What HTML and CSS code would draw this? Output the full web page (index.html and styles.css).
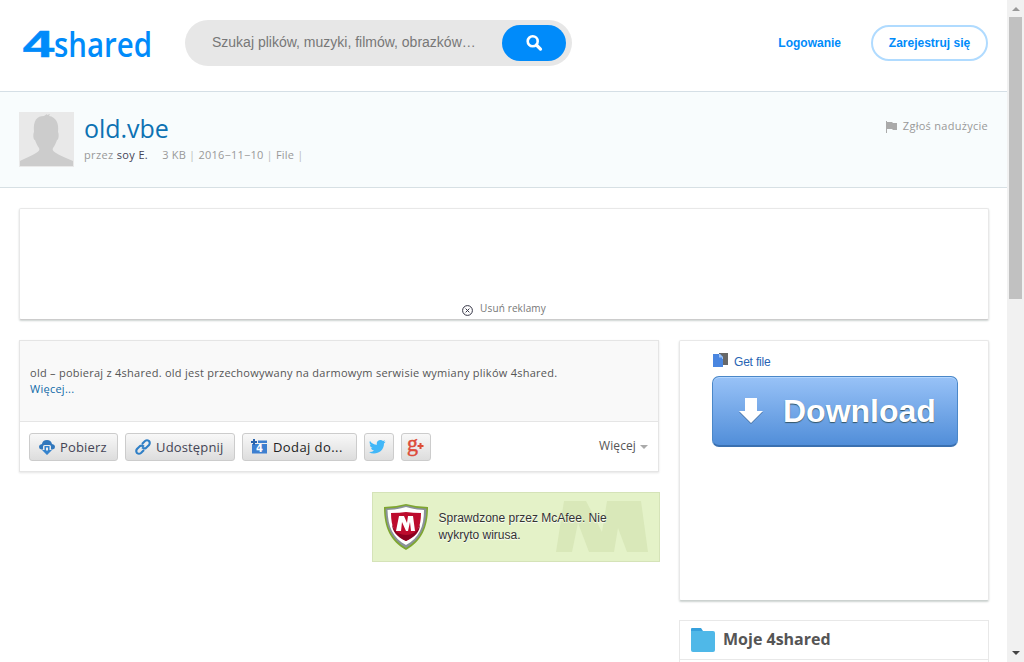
FILE: index.html
```html
<!DOCTYPE html>
<html lang="pl">
<head>
<meta charset="utf-8">
<title>old.vbe - 4shared</title>
<link rel="stylesheet" href="styles.css">
</head>
<body>
<div class="page">
  <header class="top">
    <svg class="logo" width="134" height="34" viewBox="0 0 134 34"><g fill="#008bfa"><text class="logo-four" transform="translate(.8 29.500) scale(1.530 1)">4</text><text class="logo-word" x="32" y="30" textLength="98" lengthAdjust="spacingAndGlyphs">shared</text></g></svg>
    <div class="search"><span class="placeholder">Szukaj plików, muzyki, filmów, obrazków…</span>
      <button class="search-btn"><svg width="18" height="18" viewBox="0 0 18 18" fill="none" stroke="#fff"><circle cx="7.7" cy="7.3" r="5" stroke-width="2.6"/><path d="M11.4 11 15.5 15.1" stroke-width="3.2" stroke-linecap="round"/></svg></button>
    </div>
    <nav class="account"><a class="login">Logowanie</a><a class="signup">Zarejestruj się</a></nav>
  </header>
  <section class="filebar">
    <svg class="avatar" width="55" height="55" viewBox="0 0 55 55"><path d="M0 0h55v55H0z" fill="#e9e9e9"/><path d="M1 54v-5c5-3 12-5 16-8 3-2 4-3 3-5-2-3-3-5-4-8-2 0-2-7-1-8C14 8 18 4 25 4l3-2v1l3-1-1 2c7 1 10 7 9 16 1 1 1 8-1 8-1 3-2 5-4 8-1 2 0 3 3 5 4 3 11 5 17 8v5z" fill="#ccc"/></svg>
    <div class="fileinfo"><h1>old.vbe</h1><p class="meta"><span class="by">przez <b>soy E.</b></span><span class="facts">3 KB <i>|</i> 2016−11−10 <i>|</i> File <i>|</i></span></p></div>
    <a class="report"><svg width="11" height="12" viewBox="0 0 11 12"><path d="M.5 0v12" stroke="#aaa"/><path d="M1 1h5l1 1h4v7H7L6 8H1z" fill="#aaa"/></svg><span>Zgłoś nadużycie</span></a>
  </section>
  <div class="ad"><svg width="11" height="11" viewBox="0 0 11 11" fill="none" stroke="#334"><circle cx="5.500" cy="5.500" r="4.900"/><path d="m3.600 3.600 3.800 3.800m0-3.800L3.600 7.400"/></svg><span>Usuń reklamy</span></div>
  <main class="columns">
    <div class="left">
      <div class="card">
        <div class="desc"><p>old – pobieraj z 4shared. old jest przechowywany na darmowym serwisie wymiany plików 4shared.</p><a>Więcej...</a></div>
        <div class="tools">
          <button class="btn get"><svg width="16" height="16" viewBox="0 0 16 16"><path d="M2.500 10.500Q0 10 0 8q0-2.500 3-3Q3.500 1 8 1q4 0 5 4 3 .5 3 3 0 2-2.500 2.500H12V7.500Q12 6 10.500 6h-5Q4 6 4 7.500v3z" fill="#3278bd"/><path d="M5.500 7h5v4H13l-5 5-5-5h2.500z" fill="#3583cd"/><path d="M7 8.500h2v3H7z" fill="#eee"/></svg><span>Pobierz</span></button>
          <button class="btn share"><svg width="16" height="16" viewBox="0 0 16 16" fill="none" stroke="#2f7fc6" stroke-width="2.100"><path d="m7 5 3-3q2-1.500 4 0 1.500 2 0 4l-3 3q-2 1-4-.5M9 11l-3 3q-2 1.500-4 0-1.500-2 0-4l3-3q2-1 4 .5"/></svg><span>Udostępnij</span></button>
          <button class="btn add"><svg width="17" height="15" viewBox="0 0 17 15"><path d="M1 5h15v9.500H1zM7 1.500h9v2.500H7z" fill="#3d7fd0"/><path d="M3 0v6M0 3h6" stroke="#2864ad" stroke-width="2"/><text class="four" x="5" y="13" fill="#fff">4</text></svg><span>Dodaj do...</span></button>
          <button class="btn sq"><svg width="17" height="14" viewBox="0 0 17 14"><path d="M1 1q3 4 7 3.800C7 2 9 0 11.500 0q1.500 0 2.500 1l2-.8-1 1.800 1.700-.3L15 3.500C15 10 10 13.500 5 13.500Q2 13.500 0 12q3 .2 5-1.500Q2.500 10 2 8l1.500-.1Q1 7 .7 4.500L2 5Q-.3 3 1 1z" fill="#41b7f8"/></svg></button>
          <button class="btn sq"><svg class="gp" width="18" height="24" viewBox="0 0 18 24"><text class="gplus" x="0" y="16" fill="#dd4b39" textLength="11" lengthAdjust="spacingAndGlyphs">g</text><path d="M10.500 11h6M13.500 8v6" stroke="#dd4b39" stroke-width="2"/></svg></button>
          <a class="more">Więcej</a>
        </div>
      </div>
      <div class="mcafee">
        <svg class="shield" width="44" height="46" viewBox="0 0 44 46"><path d="M0 3Q11 3 22 0q11 3 22 3c0 20-6 34-22 43C6 37 0 23 0 3z" fill="#7ea62f"/><path d="M1.500 4.500Q12 4.500 22 1.500q10 3 20.500 3c0 18-6 31-20.500 39.500C7.500 35.500 1.500 22.500 1.500 4.500z" fill="#8a929a"/><path d="M3.500 6Q12 6 22 3q10 3 18 3c0 17-5 28-18 35C9 34 4 23 3.500 6z" fill="#fff"/><path d="M7 9q9 0 15-1 7 1 15 1c0 14-4 22-15 28C11 31 7 23 7 9z" fill="#bd0b2d"/><path d="M22 31c7 0 12-4 14-11 0 8-5 13-14 17-9-4-14-10-14-17 2 7 7 11 14 11z" fill="#8c001f"/><path d="M15 12h5l3 7 1-7h5l2 15h-4l-1-9-2 9h-2l-4-9-1 9h-5z" fill="#fff"/></svg>
        <p>Sprawdzone przez McAfee. Nie wykryto wirusa.</p>
        <svg class="mark" width="94" height="51" viewBox="0 0 94 51"><path d="M8 0h22l16 31 5-31h34l7 51H71L62 27l-4 24H33L22 22l-6 29H0z" fill="#d9e8b9"/></svg>
      </div>
    </div>
    <aside class="right">
      <div class="promo">
        <div class="getfile"><svg width="15" height="14" viewBox="0 0 15 14"><path d="M6 0h9v12H6z" fill="#686868"/><path d="M0 1h7l3 3v10H0z" fill="#4a86e0"/><path d="M6 1h1l3 3v2H9V4.500H6z" fill="#9cc4fa"/></svg><a>Get file</a></div>
        <a class="download"><svg width="24" height="26" viewBox="0 0 24 26"><path d="M6 1h12v13h6L12 26 0 14h6z" fill="#456f9f"/><path d="M6 0h12v13h6L12 25 0 13h6z" fill="#fff"/></svg><span>Download</span></a>
      </div>
      <div class="mine"><svg width="24" height="24" viewBox="0 0 24 24"><path d="M0 1q0-1 1-1h9l2 3v3H0z" fill="#36a0dc"/><path d="M0 3h22q2 0 2 2v17q0 2-2 2H2q-2 0-2-2z" fill="#4fb8e8"/></svg><span>Moje 4shared</span></div>
    </aside>
  </main>
</div>
<div class="scroll"><i class="up"></i><i class="thumb"></i><i class="down"></i></div>
</body>
</html>
```
FILE: styles.css
```css
* { box-sizing: border-box; }
body { margin: 0; width: 1024px; height: 662px; overflow: hidden; display: flex; background: #fff; color: #555; font-family: "Open Sans", "Noto Sans", sans-serif; }
h1, p { margin: 0; font-weight: 400; }
span, a { white-space: nowrap; }
button { font: inherit; margin: 0; padding: 0; }
svg { display: block; flex: none; }
.page { width: 1007px; height: 662px; overflow: hidden; flex: none; }
.top { height: 92px; border-bottom: 1px solid #d5dfe6; display: flex; padding: 20px 19px 0 22px; font-family: "Liberation Sans", Arial, sans-serif; }
.logo { margin-top: 7px; overflow: visible; }
.logo-four { font: 700 37px "Liberation Sans", sans-serif; stroke: #008bfa; stroke-width: .5px; }
.logo-word { font: 600 34px "Open Sans", sans-serif; }
.search { margin-left: 29px; width: 387px; height: 46px; border-radius: 23px; background: #e7e7e7; display: flex; align-items: center; justify-content: space-between; padding: 0 6px 0 27px; }
.placeholder { font-size: 14px; color: #777; line-height: 44px; height: 46px; }
.search-btn { width: 64px; height: 36px; border: 0; border-radius: 18px; background: #008bfa; display: flex; align-items: center; justify-content: center; }
.account { margin-left: auto; display: flex; height: 46px; align-items: center; font-size: 12px; font-weight: 700; color: #008bfa; }
.signup { margin-left: 30px; width: 117px; height: 36px; line-height: 32px; text-align: center; border: 2px solid #b0dbff; border-radius: 18px; }
.filebar { height: 96px; border-bottom: 1px solid #d7e0e4; background: #f8fcfd; display: flex; padding: 20px 19px 0; }
.fileinfo { margin-left: 10px; }
h1 { font-size: 25px; line-height: 32px; color: #0d72b3; letter-spacing: -.05px; }
.meta { display: flex; gap: 14px; font-size: 11px; line-height: 16px; margin-top: 3px; color: #999; letter-spacing: .36px; }
.facts { letter-spacing: .22px; }
.meta b { color: #445; font-weight: 400; }
.meta i { color: #bbb; font-style: normal; }
.report { margin-left: auto; display: flex; align-items: flex-start; gap: 6px; font-size: 11px; line-height: 16px; color: #999; padding-top: 6px; letter-spacing: .28px; }
.report svg { margin-top: 3px; }
.ad { margin: 20px 18px 0 19px; height: 112px; border: 1px solid #e8e8e8; border-bottom-color: #ccc; border-radius: 2px; box-shadow: 0 1px 2px #ccd2d0; display: flex; justify-content: center; gap: 7px; padding-top: 91px; font-size: 10px; line-height: 16px; color: #777; letter-spacing: .13px; }
.ad svg { margin-top: 5px; }
.columns { display: flex; gap: 19px; margin: 20px 18px 0 19px; align-items: flex-start; }
.left { width: 641px; }
.card { width: 640px; border: 1px solid #e5e5e5; box-shadow: 0 1px 2px #e5e5e5; }
.desc { height: 81px; background: #f9f9f9; border-bottom: 1px solid #e5e5e5; padding: 24px 10px 0; font-size: 11px; line-height: 16px; color: #555; letter-spacing: .26px; }
.desc p { white-space: nowrap; }
.desc a { color: #0f69a8; display: block; }
.tools { height: 49px; padding: 11px 10px 0 9px; display: flex; gap: 7px; }
.btn { height: 28px; border: 1px solid #ccc; border-radius: 3px; background: linear-gradient(#f8f8f8, #ddd); display: flex; align-items: center; gap: 5px; padding: 0 0 1px 9px; font-size: 13px; color: #445; letter-spacing: .15px; }
.get { width: 89px; }
.share { width: 110px; }
.add { width: 115px; padding-left: 8px; color: #222; letter-spacing: .42px; gap: 5px; }
.sq { width: 30px; padding: 0; justify-content: center; }
.sq:nth-child(4) { padding-right: 3px; }
.four { font: 700 10px "DejaVu Sans", sans-serif; letter-spacing: 0; }
.gp { overflow: visible; }
.gplus { font: 400 23px "Liberation Serif", serif; letter-spacing: 0; stroke: #dd4b39; stroke-width: .5px; }
.more { margin-left: auto; font-size: 12px; line-height: 26px; color: #555; display: flex; align-items: center; gap: 4px; height: 26px; letter-spacing: .1px; }
.more::after { content: ""; border: 4px solid transparent; border-top-color: #aaa; border-bottom: 0; margin-top: 2px; }
.mcafee { margin: 20px 0 0 353px; width: 288px; height: 70px; background: #e4f2c8; border: 1px solid #d5e3b8; display: grid; grid-template-columns: 54px 1fr; padding: 11px 0 0 11px; font-family: "Liberation Sans", Arial, sans-serif; }
.mcafee > * { grid-row: 1; }
.mcafee p { grid-column: 2; z-index: 1; width: 180px; font-size: 12px; line-height: 17px; color: #333; padding: 6px 0 0 .5px; text-shadow: 0 1px 1px #fff; }
.mark { grid-column: 2; margin: -3px 0 0 118px; }
.right { width: 310px; }
.promo { height: 261px; border: 1px solid #e8e8e8; border-bottom-color: #ccd2d0; border-radius: 2px; box-shadow: 0 1px 2px #ccd2d0; padding: 12px 0 0 32px; font-family: "Liberation Sans", Arial, sans-serif; }
.getfile { display: flex; gap: 6px; height: 23px; padding-left: 1px; color: #2864b4; font-size: 12px; line-height: 18px; letter-spacing: -.2px; }
.download { width: 246px; height: 71px; border: 1px solid #4a87c8; border-bottom: 2px solid #3a70b0; border-radius: 7px; background: linear-gradient(#98c2f7, #518ed9); box-shadow: inset 0 1px #b5d7ff; display: flex; align-items: center; color: #fff; font-size: 32px; font-weight: 700; padding: 0 0 0 26px; gap: 20px; text-shadow: 0 1px 1px #356; }
.mine { margin-top: 19px; height: 60px; border: 1px solid #e8e8e8; display: flex; padding: 7px 0 0 11px; gap: 8px; font-size: 16px; line-height: 22px; font-weight: 700; background: linear-gradient(#e8e8e8, #e8e8e8) 0 38px / 100% 1px no-repeat; }
.scroll { width: 17px; height: 662px; background: #f1f1f1; display: flex; flex-direction: column; align-items: center; }
.up { margin-top: 7px; border: 4px solid transparent; border-bottom-color: #999; border-top: 0; }
.thumb { width: 13px; height: 282px; margin-top: 6px; background: #c1c1c1; }
.down { margin: auto 0 7px; border: 4px solid transparent; border-top-color: #444; border-bottom: 0; }
```
